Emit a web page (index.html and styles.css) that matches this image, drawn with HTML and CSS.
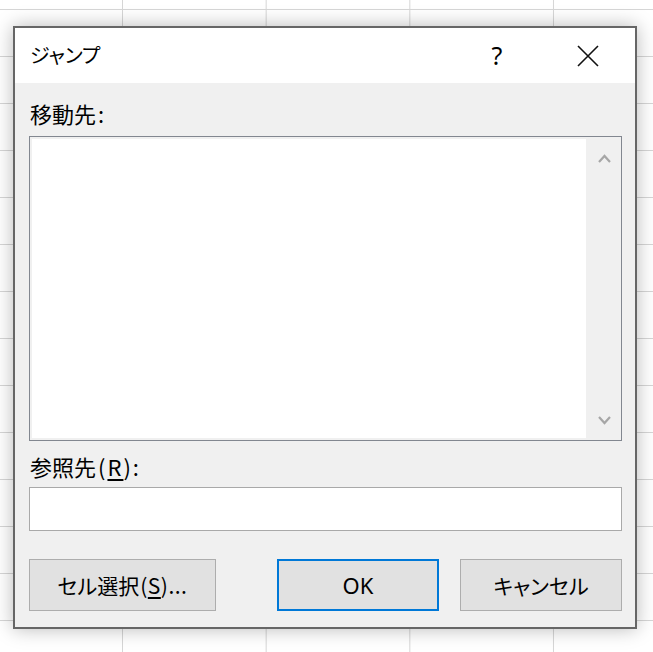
FILE: index.html
```html
<!DOCTYPE html>
<html lang="ja">
<head>
<meta charset="utf-8">
<title>ジャンプ</title>
<link rel="stylesheet" href="styles.css">
</head>
<body>
<div class="dialog">
  <div class="titlebar">
    <span class="title">ジャンプ</span>
    <span class="help">?</span>
    <span class="close">
      <svg width="22" height="22" viewBox="0 0 22 22"><path d="M1 1 L21 21 M21 1 L1 21" stroke="#111" stroke-width="1.6" fill="none"/></svg>
    </span>
  </div>
  <div class="body">
    <div class="label first">移動先<span class="lat">:</span></div>
    <div class="listbox">
      <div class="list"></div>
      <div class="scrollbar">
        <svg class="chev" width="13" height="9" viewBox="0 0 13 9"><path d="M1 8 L6.5 2 L12 8" stroke="#a6a6a6" stroke-width="2.2" fill="none"/></svg>
        <svg class="chev" width="13" height="9" viewBox="0 0 13 9"><path d="M1 1 L6.5 7 L12 1" stroke="#a6a6a6" stroke-width="2.2" fill="none"/></svg>
      </div>
    </div>
    <div class="label second">参照先<span class="lat">(<u>R</u>):</span></div>
    <div class="input"></div>
    <div class="buttons">
      <div class="btn select">セル選択<span class="lat-btn">(<u>S</u>)...</span></div>
      <div class="btn ok">OK</div>
      <div class="btn cancel">キャンセル</div>
    </div>
  </div>
</div>
</body>
</html>
```

FILE: styles.css
```css
html, body {
  margin: 0;
  padding: 0;
}
body {
  width: 653px;
  height: 652px;
  overflow: hidden;
  background-color: #ffffff;
  background-image:
    linear-gradient(to right, #d6d6d6 1px, transparent 1px),
    linear-gradient(to bottom, #d6d6d6 1px, transparent 1px);
  background-size: 143.67px 100%, 100% 47px;
  background-position: 122px 0, 0 9px;
  font-family: "Noto Sans CJK JP", "Noto Sans", sans-serif;
  font-feature-settings: "palt" 1;
  color: #000;
}
.dialog {
  margin: 26px 0 0 13px;
  width: 620px;
  height: 599px;
  border: 2px solid #666666;
  background: #f0f0f0;
  box-shadow: 0 0 18px rgba(0, 0, 0, 0.28);
  display: flex;
  flex-direction: column;
}
.titlebar {
  height: 55px;
  background: #fff;
  display: flex;
  align-items: center;
  padding-left: 15px;
  padding-right: 36px;
}
.title {
  font-size: 20px;
  flex: 1;
  line-height: 26px;
  margin-top: -2px;
}
.help {
  font-family: "Noto Sans", sans-serif;
  font-size: 25px;
  width: 20px;
  text-align: center;
  margin-right: 70px;
  margin-top: -2px;
}
.close {
  display: flex;
  width: 22px;
  height: 22px;
}
.body {
  padding: 17px 13px 0 14px;
  display: flex;
  flex-direction: column;
}
.label {
  font-size: 22px;
  line-height: 26px;
  height: 26px;
  padding-left: 1px;
}
.lat {
  letter-spacing: 2px;
  margin-left: 2px;
}
.lat-btn {
  letter-spacing: 0.5px;
  margin-left: 1px;
}
.label u, .btn u {
  text-underline-offset: 3px;
}
.listbox {
  margin-top: 10px;
  height: 303px;
  border: 1px solid #828790;
  background: #f0f0f0;
  display: flex;
}
.list {
  flex: 1;
  background: #fff;
  margin: 2px 0 2px 2px;
}
.scrollbar {
  width: 35px;
  display: flex;
  flex-direction: column;
  justify-content: space-between;
  align-items: center;
  padding: 17px 0 15px;
}
.chev {
  display: block;
  margin-left: 1px;
}
.label.second {
  margin-top: 12px;
}
.input {
  margin-top: 8px;
  height: 42px;
  border: 1px solid #a9a9a9;
  background: #fff;
}
.buttons {
  margin-top: 28px;
  display: flex;
  gap: 21px;
}
.btn {
  border: 1px solid #adadad;
  background: #e1e1e1;
  font-size: 21px;
  display: flex;
  align-items: center;
  justify-content: center;
  box-sizing: border-box;
  height: 52px;
}
.select {
  width: 187px;
}
.ok {
  width: 162px;
  margin-left: auto;
  border: 2px solid #0078d7;
  font-family: "Noto Sans", sans-serif;
  font-size: 22px;
}
.cancel {
  width: 162px;
}
```
